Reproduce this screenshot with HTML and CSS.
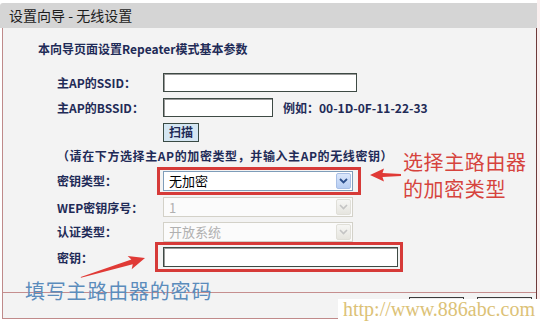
FILE: index.html
```html
<!DOCTYPE html>
<html lang="zh-CN">
<head>
    <meta charset="UTF-8">
    <title>设置向导 - 无线设置</title>
    <link rel="stylesheet" href="styles.css">
</head>
<body>
    <div class="page">
        <div class="titlebar">设置向导 - 无线设置</div>
        <div class="panel">
            <div class="intro">本向导页面设置Repeater模式基本参数</div>
            <div class="form">
                <div class="row row-ssid">
                    <span class="label">主AP的SSID：</span>
                    <span class="field"><span class="textbox w-ssid"></span></span>
                </div>
                <div class="row row-bssid">
                    <span class="label">主AP的BSSID：</span>
                    <span class="field">
                        <span class="textbox w-bssid"></span>
                        <span class="hint">例如：00-1D-0F-11-22-33</span>
                    </span>
                </div>
                <div class="row row-scan">
                    <span class="label"></span>
                    <span class="field"><span class="scan-btn">扫描</span></span>
                </div>
                <div class="row row-note">
                    <span class="note">（请在下方选择主AP的加密类型，并输入主AP的无线密钥）</span>
                </div>
                <div class="row row-type">
                    <span class="label">密钥类型：</span>
                    <span class="field">
                        <span class="combo mark mark-combo">
                            <span class="combo-text">无加密</span>
                            <span class="combo-arrow">
                                <svg width="9" height="6" viewBox="0 0 9 6"><polyline points="1,1 4.5,4.5 8,1" fill="none" stroke="#2c4f8c" stroke-width="1.8"/></svg>
                            </span>
                        </span>
                    </span>
                </div>
                <div class="row row-wep">
                    <span class="label">WEP密钥序号：</span>
                    <span class="field">
                        <span class="combo disabled">
                            <span class="combo-text">1</span>
                            <span class="combo-arrow">
                                <svg width="9" height="6" viewBox="0 0 9 6"><polyline points="1,1 4.5,4.5 8,1" fill="none" stroke="#c4c4c4" stroke-width="1.6"/></svg>
                            </span>
                        </span>
                    </span>
                </div>
                <div class="row row-auth">
                    <span class="label">认证类型：</span>
                    <span class="field">
                        <span class="combo disabled">
                            <span class="combo-text">开放系统</span>
                            <span class="combo-arrow">
                                <svg width="9" height="6" viewBox="0 0 9 6"><polyline points="1,1 4.5,4.5 8,1" fill="none" stroke="#c4c4c4" stroke-width="1.6"/></svg>
                            </span>
                        </span>
                    </span>
                </div>
                <div class="row row-key">
                    <span class="label">密钥：</span>
                    <span class="field"><span class="textbox w-key mark mark-key"></span></span>
                </div>
            </div>
            <div class="footer">
                <span class="btn"></span>
                <span class="btn"></span>
            </div>
        </div>

        <!-- annotations drawn over the screenshot -->
        <div class="note-red">选择主路由器<br>的加密类型</div>
        <div class="note-blue">填写主路由器的密码</div>
        <svg class="arrows" width="540" height="322" viewBox="0 0 540 322">
            <g transform="translate(370,175)">
                <polygon points="0,0 14,-6.5 12.5,-2 31,-1 31,1 12.5,2 14,6.5" fill="#e03a36"/>
            </g>
            <g transform="translate(145,258) rotate(-16.8)">
                <polygon points="0,0 -16,-7 -13.5,-2.4 -67,-0.4 -67,0.4 -13.5,2.4 -16,7" fill="#e03a36"/>
            </g>
        </svg>
        <div class="watermark">http://www.886abc.com</div>
    </div>
</body>
</html>
```

FILE: styles.css
```css
html, body {
    margin: 0;
    padding: 0;
    background: #fff;
}
body {
    width: 540px;
    height: 322px;
    overflow: hidden;
    font-family: "Noto Sans CJK SC", "Liberation Sans", sans-serif;
    font-size: 12px;
    color: #1f2b57;
}
.page {
    position: relative;
    width: 540px;
    height: 322px;
    padding-top: 3px;
    box-sizing: border-box;
    background: linear-gradient(to right, #fff 537px, #fbefef 537px);
}
.titlebar {
    width: 537px;
    height: 25px;
    box-sizing: border-box;
    padding-left: 9px;
    background: #d5d5d5;
    border-top-left-radius: 3px;
    color: #1c1c1c;
    font-size: 14px;
    line-height: 24px;
}
/* main panel */
.panel {
    width: 535px;
    margin-left: 2px;
    box-sizing: border-box;
    background: #f3f3f3;
    border-left: 1px solid #bf8a8a;
    border-right: 1px solid #6e3a3a;
    border-bottom: 1px solid #c08a8a;
}
.intro {
    padding: 13px 0 0 35px;
    line-height: 16px;
    font-weight: bold;
}
.form {
    margin-top: 13px;
    padding-left: 54px;
}
.row {
    display: grid;
    grid-template-columns: 106px 1fr;
    align-items: center;
}
.row-ssid { height: 25px; }
.row-bssid { height: 25px; }
.row-scan { height: 25px; }
.row-note { height: 21px; display: flex; }
.row-type { height: 29px; }
.row-wep { height: 24px; }
.row-auth { height: 25px; }
.row-key { height: 26px; }
.label {
    font-weight: bold;
    white-space: nowrap;
}
.field {
    display: flex;
    align-items: center;
}
.textbox {
    display: block;
    height: 19px;
    box-sizing: border-box;
    background: #fff;
    border: 1px solid #3e4a44;
    box-shadow: inset 1px 1px 0 #9a9a9a;
}
.w-ssid { width: 194px; }
.w-bssid { width: 110px; }
.w-key { width: 235px; height: 20px; }
.hint {
    margin-left: 10px;
    font-weight: bold;
}
.scan-btn {
    display: block;
    width: 36px;
    height: 19px;
    box-sizing: border-box;
    background: #d4e6f2;
    border: 1px solid #394a44;
    text-align: center;
    line-height: 16px;
    font-weight: bold;
}
.note {
    font-weight: bold;
    white-space: nowrap;
    letter-spacing: 0.6px;
}
/* drop-down boxes */
.combo {
    display: flex;
    align-items: center;
    justify-content: space-between;
    width: 190px;
    height: 20px;
    box-sizing: border-box;
    background: #fff;
    border: 1px solid #7f9db9;
    padding: 1px;
}
.combo-text {
    padding-left: 4px;
    font-size: 13px;
    color: #000;
}
.combo-arrow {
    display: flex;
    align-items: center;
    justify-content: center;
    width: 15px;
    height: 16px;
    border-radius: 2px;
    background: linear-gradient(#dbe7fb, #b6cdf3);
    border: 1px solid #a8bfe6;
    box-sizing: border-box;
}
.combo.disabled {
    border-color: #d3d1c8;
    background: #fbfbfb;
}
.combo.disabled .combo-text {
    color: #b0b0b0;
}
.combo.disabled .combo-arrow {
    background: linear-gradient(#f6f6f4, #e6e5df);
    border-color: #e0dfd8;
}
/* red highlight boxes */
.mark {
    position: relative;
}
.mark::after {
    content: "";
    position: absolute;
    border: 3px solid #d63a38;
}
.mark-combo::after {
    top: -5px;
    right: -9px;
    bottom: -5px;
    left: -7px;
}
.mark-key::after {
    top: -6px;
    right: -6px;
    bottom: -6px;
    left: -9px;
}
.footer {
    margin-top: 22px;
    height: 26px;
    box-sizing: border-box;
    border-top: 1px solid #c58e8e;
    display: flex;
    justify-content: flex-end;
    gap: 13px;
    padding: 4px 4px 0 0;
}
.btn {
    display: block;
    width: 55px;
    height: 20px;
    box-sizing: border-box;
    border: 1px solid #3c3c3c;
    background: #eee;
}
/* annotations */
.note-red {
    position: absolute;
    left: 403px;
    top: 148px;
    font-size: 20px;
    line-height: 27px;
    letter-spacing: 0.6px;
    color: #d6433d;
}
.note-blue {
    position: absolute;
    left: 25px;
    top: 279px;
    font-size: 20px;
    line-height: 24px;
    letter-spacing: 0.8px;
    color: #5b8cbc;
}
.arrows {
    position: absolute;
    left: 0;
    top: 0;
    pointer-events: none;
}
.watermark {
    position: absolute;
    left: 338px;
    top: 299px;
    width: 202px;
    height: 23px;
    background: #fff;
    padding-left: 5px;
    box-sizing: border-box;
    font-family: "Liberation Serif", serif;
    font-size: 20px;
    line-height: 21px;
    color: #dcc277;
}
```
